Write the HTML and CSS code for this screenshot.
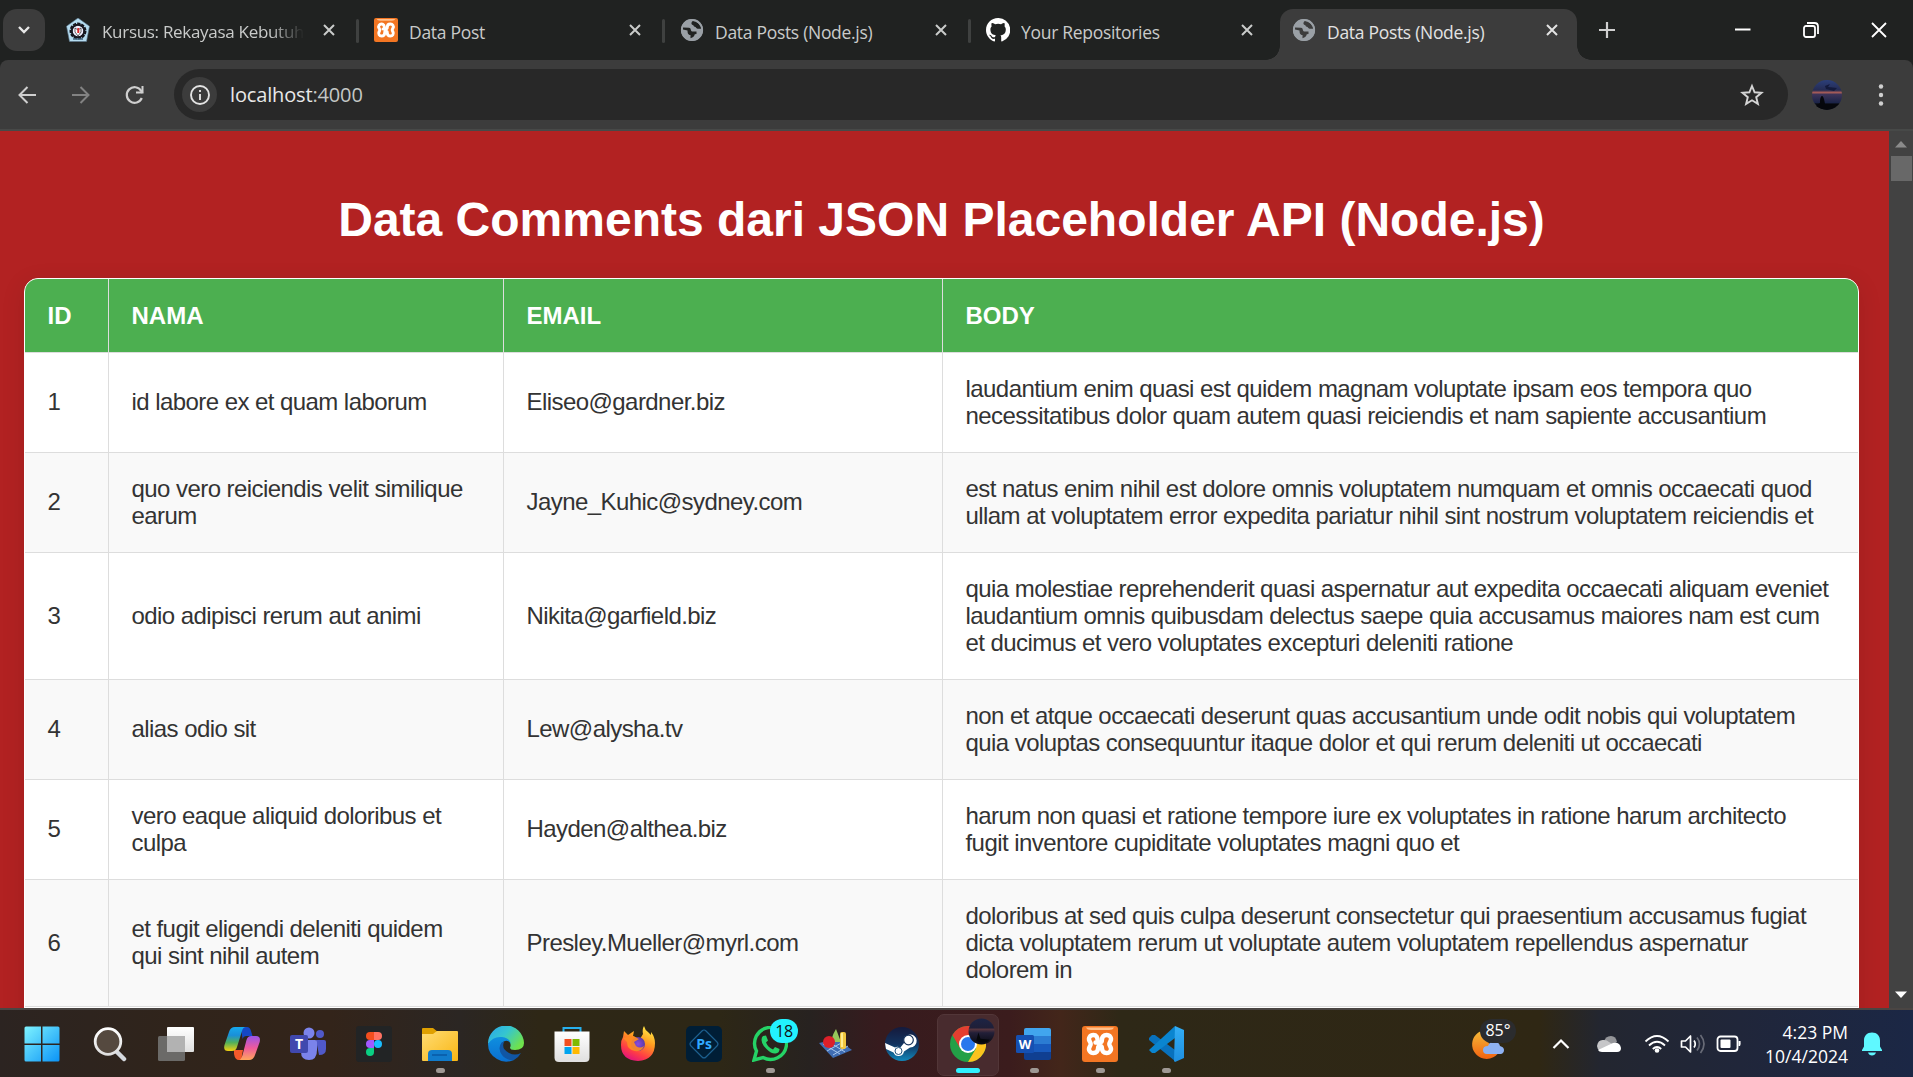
FILE: index.html
```html
<!DOCTYPE html>
<html lang="id">
<head>
<meta charset="utf-8">
<title>Data Posts (Node.js)</title>
<link rel="stylesheet" href="styles.css">
</head>
<body>
<svg class="defs" width="0" height="0" aria-hidden="true">
  <defs>
    <symbol id="x" viewBox="0 0 14 14"><path d="M2 2l10 10M12 2L2 12" stroke="currentColor" stroke-width="2" fill="none"/></symbol>
    <symbol id="globe" viewBox="0 0 24 24"><circle cx="12" cy="12" r="11" fill="#9aa0a6"/><path d="M3 9.500l6 .3c2.500.2 1.200 3.400 3.200 3.700h4.300v2.600l-1.700.2c-.7 2.200-1.500 3.300-4.300 3.900v-3.200c-2.800-.2-2.900-2.700-3-4.600L3 11.500zM12.800 3c-1.700 1.200-1.900 3.500 0 3.900 1 .2.700 1.800 2 1.900 1.300.1 1.200 1.700 2.700 1.900l3.600.1-.5-2.300C19 5.300 16.500 3.300 12.800 3z" fill="var(--hole)"/><circle cx="12" cy="12" r="10.200" fill="none" stroke="#9aa0a6" stroke-width="1.800"/></symbol>
    <symbol id="xampp" viewBox="0 0 36 36"><rect width="36" height="36" rx="3" fill="#f37623"/><path d="M4 1.500h28q-1 2.500-5 2.500H9Q5 4 4 1.500z" fill="#ffc08c"/><path d="M15.500 15.500C16 11 14 9 11.500 9 8 9 6 12 7.500 15c.6 1.200 1.200 2 1.200 3s-.6 1.800-1.200 3C6 24 8 27 11.500 27c3 0 4.500-2 4.500-4.500 0-2 1-2.500 2-2.500s2 .5 2 2.500c0 2.500 1.500 4.500 4.500 4.500 3.500 0 5.500-3 4-6-.6-1.200-1.200-2-1.200-3s.6-1.800 1.200-3c1.500-3-.5-6-4-6-3 0-4.500 2-4.500 4.500 0 2.500-1 3-2.500 3h-4" fill="none" stroke="#fff" stroke-width="4.400" stroke-linejoin="round" stroke-linecap="round"/></symbol>
    <linearGradient id="win" x1="0" y1="0" x2="1" y2="1"><stop stop-color="#7ef3ff"/><stop offset="1" stop-color="#0b93f6"/></linearGradient>
    <linearGradient id="white" x1="0" y1="0" x2="0" y2="1"><stop stop-color="#fff"/><stop offset="1" stop-color="#dfdfdf"/></linearGradient>
    <linearGradient id="cop1" x1="0" y1="0" x2="0" y2="1"><stop stop-color="#16a9ee"/><stop offset=".35" stop-color="#1a8fd8"/><stop offset=".65" stop-color="#51b05a"/><stop offset="1" stop-color="#f4d00f"/></linearGradient>
    <linearGradient id="cop2" x1="0" y1="0" x2="0" y2="1"><stop stop-color="#9a54e8"/><stop offset=".5" stop-color="#ee5a9c"/><stop offset="1" stop-color="#ffa65c"/></linearGradient>
    <linearGradient id="folder" x1="0" y1="0" x2="1" y2="1"><stop stop-color="#ffdc73"/><stop offset="1" stop-color="#f9b614"/></linearGradient>
    <linearGradient id="edge1" x1="0" y1="0" x2="1" y2=".6"><stop stop-color="#29a5ec"/><stop offset=".5" stop-color="#35c5d0"/><stop offset="1" stop-color="#6fe24c"/></linearGradient>
    <linearGradient id="edge2" x1="0" y1="0" x2="0" y2="1"><stop stop-color="#0f8fdf"/><stop offset="1" stop-color="#0a6fd0"/></linearGradient>
    <linearGradient id="fox" x1=".8" y1="0" x2=".3" y2="1"><stop stop-color="#fff04a"/><stop offset=".4" stop-color="#ff9a1f"/><stop offset=".75" stop-color="#ff3d45"/><stop offset="1" stop-color="#e1127f"/></linearGradient>
    <radialGradient id="foxglobe"><stop stop-color="#8b4be0"/><stop offset="1" stop-color="#5a3aa6"/></radialGradient>
    <linearGradient id="steam" x1="0" y1="0" x2="0" y2="1"><stop stop-color="#151a3c"/><stop offset=".5" stop-color="#12325e"/><stop offset="1" stop-color="#1288bb"/></linearGradient>
    <linearGradient id="dusk" x1="0" y1="0" x2="0" y2="1"><stop stop-color="#2b3f7a"/><stop offset=".34" stop-color="#252b52"/><stop offset=".42" stop-color="#a85c58"/><stop offset=".48" stop-color="#3d3459"/><stop offset=".75" stop-color="#1c2448"/><stop offset=".8" stop-color="#080a12"/></linearGradient>
    <linearGradient id="duskdim" x1="0" y1="0" x2="0" y2="1"><stop stop-color="#1c2445"/><stop offset=".35" stop-color="#1f1f38"/><stop offset=".42" stop-color="#55343e"/><stop offset=".55" stop-color="#221f38"/><stop offset="1" stop-color="#080a10"/></linearGradient>
    <linearGradient id="moon" x1="0" y1="0" x2="0" y2="1"><stop stop-color="#f5bd3a"/><stop offset="1" stop-color="#f26210"/></linearGradient>
    <linearGradient id="vs" x1="0" y1="0" x2="0" y2="1"><stop stop-color="#33aef5"/><stop offset="1" stop-color="#1e8fe0"/></linearGradient>
  </defs>
</svg>

<header class="tabstrip">
  <div class="tab-search"><svg width="14" height="10" viewBox="0 0 14 10"><path d="M2 2l5 5 5-5" fill="none" stroke="#e8e8e8" stroke-width="2.400"/></svg></div>
  <div class="tab first">
    <svg class="favicon" viewBox="0 0 24 24"><path d="M12 0l11.500 8.200-3 15.300h-17L.5 8.200z" fill="#b5dcf0" stroke="#587287" stroke-width=".6"/><circle cx="12" cy="13" r="7" fill="#eef" stroke="#17171f" stroke-width="3" stroke-dasharray="3 1"/><circle cx="12" cy="13" r="6.300" fill="none" stroke="#17171f" stroke-width="2"/><path d="M9 10l3 2 3-2v4l-3 4-3-4z" fill="#fff" stroke="#222" stroke-width=".7"/><path d="M11.300 10h2v5h-2z" fill="#d8262c"/><path d="M7 21h10" stroke="#41637d" stroke-width="1.500"/></svg>
    <span class="title fade">Kursus: Rekayasa Kebutuh</span><svg class="close"><use href="#x"/></svg>
  </div>
  <div class="tab"><svg class="favicon"><use href="#xampp"/></svg><span class="title">Data Post</span><svg class="close"><use href="#x"/></svg></div>
  <div class="tab"><svg class="favicon"><use href="#globe"/></svg><span class="title">Data Posts (Node.js)</span><svg class="close"><use href="#x"/></svg></div>
  <div class="tab last"><svg class="favicon" viewBox="0 0 24 24"><path d="M12 0C5.400 0 0 5.400 0 12c0 5.300 3.400 9.800 8.200 11.400.6.100.8-.3.800-.6v-2c-3.300.7-4-1.600-4-1.600-.6-1.400-1.400-1.800-1.400-1.800-1-.7.100-.7.100-.7 1.200.1 1.900 1.200 1.900 1.200 1 1.900 2.800 1.300 3.500 1 .1-.8.400-1.300.8-1.600-2.700-.3-5.500-1.300-5.500-6 0-1.200.5-2.300 1.300-3.100-.2-.4-.6-1.600 0-3.200 0 0 1-.3 3.400 1.200a11.500 11.500 0 0 1 6 0c2.300-1.500 3.300-1.200 3.300-1.200.6 1.600.2 2.800.1 3.200.8.800 1.300 1.900 1.300 3.200 0 4.600-2.800 5.600-5.500 5.900.5.400.9 1 .9 2.200v3.300c0 .3.100.7.800.6A12 12 0 0 0 12 0z" fill="#fff"/></svg><span class="title">Your Repositories</span><svg class="close"><use href="#x"/></svg></div>
  <div class="tab active"><svg class="favicon"><use href="#globe"/></svg><span class="title">Data Posts (Node.js)</span><svg class="close"><use href="#x"/></svg></div>
  <svg class="plus" width="18" height="18" viewBox="0 0 18 18"><path d="M9 1v16M1 9h16" stroke="#d0d0d0" stroke-width="2.200"/></svg>
  <div class="window-buttons">
    <svg width="16" height="16" viewBox="0 0 16 16"><path d="M0 7.500h15.500" stroke="#fff" stroke-width="2"/></svg>
    <svg width="16" height="16" viewBox="0 0 16 16"><rect x="1" y="4" width="11" height="11" rx="2" fill="none" stroke="#fff" stroke-width="1.800"/><path d="M4 1h7.500q3.500 0 3.500 3.500V12" fill="none" stroke="#fff" stroke-width="1.800"/></svg>
    <svg width="16" height="16" viewBox="0 0 16 16"><path d="M1 1l14 14M15 1L1 15" stroke="#fff" stroke-width="1.800"/></svg>
  </div>
</header>

<nav class="toolbar">
  <div class="nav-buttons">
    <svg width="20" height="20" viewBox="0 0 20 20"><path d="M19 10H3M10.500 2L2.500 10l8 8" fill="none" stroke="#cfcfcf" stroke-width="2"/></svg>
    <svg width="20" height="20" viewBox="0 0 20 20"><path d="M1 10h16M9.500 2l8 8-8 8" fill="none" stroke="#828282" stroke-width="2"/></svg>
    <svg width="20" height="20" viewBox="0 0 20 20"><path d="M16.800 13a7.800 7.800 0 1 1-.6-7.200l1.300 2" fill="none" stroke="#cfcfcf" stroke-width="2.200"/><path d="M18.500 1v7.500H11V6.500h5.500V1z" fill="#cfcfcf"/></svg>
  </div>
  <div class="address">
    <div class="info"><svg width="22" height="22" viewBox="0 0 22 22"><circle cx="11" cy="11" r="9" fill="none" stroke="#e3e3e3" stroke-width="1.900"/><path d="M11 10v6M11 6v2" stroke="#e3e3e3" stroke-width="1.900"/></svg></div>
    <span class="url">localhost<span class="port">:4000</span></span>
    <svg class="star" width="24" height="24" viewBox="0 0 24 24"><path d="M12 3l2.600 6.300 6.900.5-5.300 4.400 1.700 6.700-5.900-3.600-5.900 3.600 1.700-6.700-5.300-4.400 6.900-.5z" fill="none" stroke="#d5d5d5" stroke-width="1.900"/></svg>
  </div>
  <svg class="avatar" width="30" height="30" viewBox="0 0 30 30"><circle cx="15" cy="15" r="15" fill="url(#dusk)"/><path d="M13 6l5-2-2 3 9 1-3 3-8-2z" fill="#131a3c"/><path d="M4 26l4-3c0-5 1-7 2-7s2 2 3 8h14l-3 2q-9 7-20 0z" fill="#06070c"/></svg>
  <svg class="menu" width="6" height="22" viewBox="0 0 6 22"><g fill="#cfcfcf"><circle cx="3" cy="2.500" r="2.200"/><circle cx="3" cy="11" r="2.200"/><circle cx="3" cy="19.500" r="2.200"/></g></svg>
</nav>

<div class="viewport">
  <main class="page">
    <h1>Data Comments dari JSON Placeholder API (Node.js)</h1>
    <div class="card">
      <table>
        <colgroup><col class="c-id"><col class="c-name"><col class="c-email"><col></colgroup>
        <thead><tr><th>ID</th><th>NAMA</th><th>EMAIL</th><th>BODY</th></tr></thead>
        <tbody>
          <tr><td>1</td><td>id labore ex et quam laborum</td><td>Eliseo@gardner.biz</td><td>laudantium enim quasi est quidem magnam voluptate ipsam eos tempora quo<br>necessitatibus dolor quam autem quasi reiciendis et nam sapiente accusantium</td></tr>
          <tr><td>2</td><td>quo vero reiciendis velit similique<br>earum</td><td>Jayne_Kuhic@sydney.com</td><td>est natus enim nihil est dolore omnis voluptatem numquam et omnis occaecati quod<br>ullam at voluptatem error expedita pariatur nihil sint nostrum voluptatem reiciendis et</td></tr>
          <tr><td>3</td><td>odio adipisci rerum aut animi</td><td>Nikita@garfield.biz</td><td>quia molestiae reprehenderit quasi aspernatur aut expedita occaecati aliquam eveniet<br>laudantium omnis quibusdam delectus saepe quia accusamus maiores nam est cum<br>et ducimus et vero voluptates excepturi deleniti ratione</td></tr>
          <tr><td>4</td><td>alias odio sit</td><td>Lew@alysha.tv</td><td>non et atque occaecati deserunt quas accusantium unde odit nobis qui voluptatem<br>quia voluptas consequuntur itaque dolor et qui rerum deleniti ut occaecati</td></tr>
          <tr><td>5</td><td>vero eaque aliquid doloribus et<br>culpa</td><td>Hayden@althea.biz</td><td>harum non quasi et ratione tempore iure ex voluptates in ratione harum architecto<br>fugit inventore cupiditate voluptates magni quo et</td></tr>
          <tr><td>6</td><td>et fugit eligendi deleniti quidem<br>qui sint nihil autem</td><td>Presley.Mueller@myrl.com</td><td>doloribus at sed quis culpa deserunt consectetur qui praesentium accusamus fugiat<br>dicta voluptatem rerum ut voluptate autem voluptatem repellendus aspernatur<br>dolorem in</td></tr>
        </tbody>
      </table>
    </div>
  </main>
  <div class="scrollbar">
    <svg width="12" height="7" viewBox="0 0 12 7"><path d="M0 6.500L6 0l6 6.500z" fill="#8b8b8b"/></svg>
    <div class="thumb"></div>
    <svg class="down" width="12" height="7" viewBox="0 0 12 7"><path d="M0 .5h12L6 7z" fill="#fff"/></svg>
  </div>
</div>

<footer class="taskbar">
  <div class="apps">
    <div class="app start"><svg viewBox="0 0 36 36"><path d="M2 .500h15v17H.5V2Q.5.500 2 .500zM18.500.500H34q1.500 0 1.500 1.500v15.500h-17zM.5 19H17v16.500H2Q.5 35.500.5 34zM18.500 19h17v15q0 1.500-1.500 1.500H18.500z" fill="url(#win)"/></svg></div>
    <div class="app"><svg viewBox="0 0 36 36"><path d="M24 25l8 8" stroke="#d5d9de" stroke-width="4.500" stroke-linecap="round"/><circle cx="16" cy="15.500" r="12.800" fill="#55493f" stroke="url(#white)" stroke-width="2.800"/></svg></div>
    <div class="app"><svg viewBox="0 0 36 36"><rect x="9" y="1" width="27" height="25" rx="1" fill="url(#white)"/><rect x="0" y="10" width="27" height="25" rx="1.500" fill="#6b6a68" /><rect x="9" y="10" width="18" height="16" fill="#b2b2b2"/></svg></div>
    <div class="app"><svg viewBox="0 0 36 36"><path d="M17 1h6q3 0 4 4l1.500 5h-6q-3 0-4 3z" fill="#1547c4"/><path d="M10 24h9l-1 5q-1 5 2 5h-5q-4 0-5-6z" fill="#f5592b"/><path d="M11 1h11q-3 0-4 4l-5 16q-1 4-5 4H4q-5 0-3.500-6L5 6q1.500-5 6-5z" fill="url(#cop1)"/><path d="M25 34H15q2 0 3.500-5l4-15q1-4 5-4H32q5 0 3.700 6L31 29q-1.500 5-6 5z" fill="url(#cop2)"/></svg></div>
    <div class="app"><svg viewBox="0 0 36 36"><circle cx="30" cy="8" r="4" fill="#5059c9"/><path d="M26 14h8q2 0 2 2v7q0 6-7 6z" fill="#5059c9"/><circle cx="19" cy="7" r="5.500" fill="#7b83eb"/><path d="M11 14h14q2 0 2 2v8q0 10-8 10t-8-8z" fill="#7b83eb"/><rect y="9" width="18" height="18" rx="2" fill="#4048ae"/><text x="9" y="23" class="t-letter">T</text></svg></div>
    <div class="app"><svg viewBox="0 0 36 36"><rect width="36" height="36" rx="3" fill="#222425"/><path d="M18 6h-4a4 4 0 0 0 0 8h4z" fill="#f24e1e"/><path d="M18 6h4a4 4 0 0 1 0 8h-4z" fill="#ff7262"/><path d="M18 14h-4a4 4 0 0 0 0 8h4z" fill="#a259ff"/><circle cx="22" cy="18" r="4" fill="#1abcfe"/><path d="M18 22h-4a4 4 0 1 0 4 4z" fill="#0acf83"/></svg></div>
    <div class="app run"><svg viewBox="0 0 36 36"><path d="M0 3q0-1 1-1h10l5 4-4 5H0z" fill="#dfa000"/><path d="M0 8h11l4-3h20q1 0 1 1v28q0 1-1 1H1q-1 0-1-1z" fill="url(#folder)"/><path d="M6 35V28q0-4 4-4h16q4 0 4 4v7z" fill="#117bcb"/><path d="M10 29h15" stroke="#0959a5" stroke-width="1.500"/></svg></div>
    <div class="app"><svg viewBox="0 0 36 36"><path d="M0 18A18 18 0 0 1 36 17q0 7-9 7-5 0-5-2.500c2-3-1-8.500-6-8.500Q6 13 0 18z" fill="url(#edge1)"/><path d="M0 18Q5 10 14 11q8 1 9 7-2-4-6-3-6 2-3 10 4 8 12 9Q17 38 9 33 0 28 0 18z" fill="url(#edge2)"/><path d="M14 16q-5 6 0 13 5 6 12 5 5-3 7-7-6 3-12 0-8-4-5-11z" fill="#1156a4"/></svg></div>
    <div class="app"><svg viewBox="0 0 36 36"><path d="M9.500 7V2h17v5" fill="none" stroke="#27b0ee" stroke-width="2"/><path d="M.5 5.500h35v26q0 4.500-4.500 4.500H5q-4.500 0-4.500-4.500z" fill="url(#white)"/><path d="M10.500 13h7v7h-7z" fill="#f25022"/><path d="M18.500 13h7v7h-7z" fill="#7fba00"/><path d="M10.500 21h7v7h-7z" fill="#00a4ef"/><path d="M18.500 21h7v7h-7z" fill="#ffb900"/></svg></div>
    <div class="app"><svg viewBox="0 0 36 36"><path d="M4 5l4 4 6-4-1 5 7 3 3-5q-1-5 1-8 1 4 4 6l3 3v-3q4 5 4 11 0 17-17 18Q1 34 1 19q0-5 2-8z" fill="url(#fox)"/><circle cx="18" cy="18" r="7" fill="url(#foxglobe)"/><path d="M3 12l10-2 6 3-5 3 2 4q4 3 8 0-2 6-9 5-8-1-8-9z" fill="#ff8b21" opacity=".9"/></svg></div>
    <div class="app"><svg viewBox="0 0 36 36"><rect width="36" height="36" rx="5" fill="#001e36"/><path d="M18 4q1 0 2 1l11 11q2 2 0 4L20 31q-2 2-4 0L5 20q-2-2 0-4L16 5q1-1 2-1z" fill="none" stroke="#1d608f" stroke-width="1.200"/><text x="18" y="23" class="ps-letter">Ps</text></svg></div>
    <div class="app run"><svg viewBox="0 0 36 36"><path d="M2 34l2.500-9A16 16 0 1 1 11 31.500z" fill="none" stroke="#25d366" stroke-width="3.400"/><path d="M11 10l3-.5 2 5-2 2q2 5 7 7l2-2.500 4.500 2q0 4-4 4.500-4 .5-9-4.500-5-5-5-9 0-3 1.500-4z" fill="#25d366"/></svg><span class="badge">18</span></div>
    <div class="app"><svg viewBox="0 0 36 36"><path d="M1 17l18-4 15 11-19 8z" fill="#3f6db3"/><path d="M5 18l17 10M11 16l16 10M9 25l16-9M15 29l15-9" stroke="#a8c7ec" stroke-width="1"/><path d="M18 3q-6 10-3 13h8z" fill="#97c65b"/><circle cx="11" cy="16" r="6" fill="#dd2029"/><rect x="22" y="6" width="6" height="17" rx="2" fill="#f0c63f"/><path d="M24 7v14" stroke="#ffed91" stroke-width="2"/></svg></div>
    <div class="app"><svg viewBox="0 0 36 36"><circle cx="18" cy="18" r="17" fill="url(#steam)"/><path d="M1 17l10 4.500q3-1.500 5 .5l4-5a6.500 6.500 0 1 1 6 4.500l-6 4q-1 4.500-5.500 4.500-3.500 0-5-3.500L2 23z" fill="#fff"/><circle cx="24.500" cy="14" r="4.800" fill="#fff" stroke="#17335c" stroke-width="1.200"/><circle cx="14.500" cy="25" r="3.500" fill="none" stroke="#24537c"/></svg></div>
    <div class="app current"><svg viewBox="0 0 36 36"><circle cx="18" cy="18" r="18" fill="#23a047"/><path d="M2.400 9A18 18 0 0 1 33.600 9H18l-8 13z" fill="#e53e30"/><path d="M18 9h15.600A18 18 0 0 1 18 36l8-13.500z" fill="#fcc31e"/><circle cx="18" cy="18" r="9" fill="#fff"/><circle cx="18" cy="18" r="7" fill="#2878ed"/></svg><svg class="profile" viewBox="0 0 26 26"><circle cx="13" cy="13" r="12.500" fill="url(#duskdim)"/><path d="M8 22l2-8 2 6 9 1q-5 5-13 1z" fill="#05070b"/></svg></div>
    <div class="app run"><svg viewBox="0 0 36 36"><path d="M8 4q0-2 2-2h23q2 0 2 2v6H8z" fill="#41a5ee"/><path d="M8 10h27v8H8z" fill="#2b7cd3"/><path d="M8 18h27v8H8z" fill="#185abd"/><path d="M8 26h27v6q0 2-2 2H10q-2 0-2-2z" fill="#103f91"/><rect y="9" width="18" height="18" rx="1.500" fill="#1550b2"/><text x="9" y="22.500" class="w-letter">W</text></svg></div>
    <div class="app run"><svg><use href="#xampp"/></svg></div>
    <div class="app run"><svg viewBox="0 0 36 36"><path d="M1 12l3-3h3l20 15v11L1 14z" fill="#0871bd"/><path d="M1 24l26-24v12L7 27H4l-3-3z" fill="#0a85d0"/><path d="M27 0l9 4v28l-9 4-1-1z" fill="url(#vs)"/></svg></div>
  </div>
  <div class="tray">
    <div class="weather"><svg width="36" height="36" viewBox="0 0 36 36"><path d="M15 4a14.500 14.500 0 1 0 15 20Q15 20 15 4z" fill="url(#moon)"/><path d="M17 28q-4 0-4-4t5-4q2-5 7-4 4 0 5 4 4 1 4 4t-3 4z" fill="#8fb2f3"/></svg><span class="temp">85°</span></div>
    <svg class="chev" width="18" height="12" viewBox="0 0 18 12"><path d="M1.500 10L9 2.500 16.500 10" fill="none" stroke="#fff" stroke-width="2.200"/></svg>
    <svg class="cloud" width="24" height="18" viewBox="0 0 24 18"><path d="M7 7q1-6 7-6 5 0 6 6L12 12z" fill="#949599"/><path d="M0 11q1-7 7-6 3 0 5 2l8 5-17 4q-3-2-3-5z" fill="#c6c6c8"/><path d="M1 15l15-7q7-1 8 5 0 4-4 4H5q-3 0-4-2z" fill="#fff"/></svg>
    <svg class="wifi" width="26" height="20" viewBox="0 0 26 20"><g fill="none" stroke="#fff" stroke-width="1.800"><path d="M1.500 7.500q11.500-11 23 0M5 11.500q8-7.500 16 0M8.800 15q4.200-4 8.400 0"/></g><circle cx="13" cy="16.500" r="2.300" fill="#fff"/></svg>
    <svg class="sound" width="26" height="20" viewBox="0 0 26 20"><path d="M1.500 7h4l5-5v16l-5-5h-4z" fill="none" stroke="#fff" stroke-width="1.700" stroke-linejoin="round"/><path d="M14 6.500q2.500 3.500 0 7" fill="none" stroke="#fff" stroke-width="1.700"/><path d="M17 3.500q5 6.500 0 13M20.500 1q7 9 0 18" fill="none" stroke="#686b77" stroke-width="1.700"/></svg>
    <svg class="battery" width="26" height="18" viewBox="0 0 26 18"><rect x="1.500" y="1.500" width="20" height="14.500" rx="3" fill="none" stroke="#fff" stroke-width="1.800"/><rect x="4.500" y="4.500" width="10" height="8.500" rx="1" fill="#fff"/><path d="M22.500 6h2q.5 3-.5 5h-1.500z" fill="#fff"/></svg>
    <div class="clock"><div class="time">4:23 PM</div><div class="date">10/4/2024</div></div>
    <svg class="bell" width="20" height="24" viewBox="0 0 20 24"><path d="M10 .500c5 0 8 3.500 8 8v6l2 3.500v1H0v-1l2-3.500v-6c0-4.500 3-8 8-8zM6 20.500h8q-1 3-4 3t-4-3z" fill="#5ff8ff"/></svg>
  </div>
</footer>
</body>
</html>
```
FILE: styles.css
```css
* { box-sizing: border-box; }
body { margin: 0; width: 1913px; height: 1077px; overflow: hidden; display: flex; flex-direction: column; background: #202221; font-family: "Open Sans", "Noto Sans", sans-serif; }
svg { display: block; flex: none; }
.defs { position: absolute; }

/* tab strip */
.tabstrip { height: 60px; flex: none; display: flex; align-items: flex-start; background: #202221; padding-left: 3px; color: #c9cbca; --hole: #202221; }
.tab-search { width: 42px; height: 42px; margin: 9px 7px 0 0; border-radius: 14px; background: #3c3c3c; display: flex; align-items: center; justify-content: center; }
.tab { width: 306px; height: 51px; margin-top: 9px; padding: 0 22px 9px 16px; display: flex; align-items: center; position: relative; }
.tab.first { padding-left: 14px; }
.tab.first .favicon { margin-right: 12px; }
.tab::after { content: ""; position: absolute; right: -1px; top: 10px; width: 3px; height: 24px; border-radius: 2px; background: #3f4140; }
.tab.last::after { display: none; }
.favicon { width: 24px; height: 24px; margin-right: 11px; }
.title { flex: 1; font-size: 17.500px; line-height: 24px; white-space: nowrap; overflow: hidden; letter-spacing: -0.3px; padding-top: 3px; }
.fade { font-size: 17px; max-width: 202px; margin-right: auto; -webkit-mask-image: linear-gradient(90deg, #000 83%, transparent); mask-image: linear-gradient(90deg, #000 83%, transparent); }
.close { width: 14px; height: 14px; }
.tab.active { --hole: #3c3c3c; background: #3c3c3c; color: #e3e3e3; width: 297px; margin-left: 4px; padding: 0 18px 9px 12px; border-radius: 13px 13px 0 0; }
.tab.active::before, .tab.active::after { content: ""; position: absolute; top: auto; bottom: 0; width: 14px; height: 14px; border-radius: 0; }
.tab.active::before { left: -14px; background: radial-gradient(circle at 0 0, transparent 13.500px, #3c3c3c 14px); }
.tab.active::after { right: -14px; background: radial-gradient(circle at 100% 0, transparent 13.500px, #3c3c3c 14px); }
.plus { margin: 21px 0 0 21px; }
.window-buttons { display: flex; gap: 52px; margin: 22px 26px 0 auto; }

/* toolbar */
.toolbar { height: 71px; flex: none; display: flex; align-items: center; background: #3c3c3c; border-bottom: 2px solid #474948; border-radius: 8px 8px 0 0; padding-left: 17px; }
.nav-buttons { display: flex; gap: 34px; width: 157px; }
.address { width: 1614px; height: 51px; border-radius: 26px; background: #282828; display: flex; align-items: center; padding: 0 24px 0 8px; }
.info { width: 35px; height: 35px; border-radius: 50%; background: #3c3c3c; display: flex; align-items: center; justify-content: center; }
.url { margin-left: 13px; font-size: 20px; line-height: 28px; color: #e8e8e8; letter-spacing: -0.15px; }
.port { color: #c4c7c5; }
.star { margin-left: auto; }
.avatar { margin-left: 24px; }
.menu { margin-left: 36px; }

/* page */
.viewport { height: 877px; flex: none; display: flex; overflow: hidden; background: #b22222; }
.page { width: 1889px; padding: 0 30px 0 24px; font-family: "Liberation Sans", Arial, sans-serif; color: #333; }
h1 { margin: 61px 0 31px; height: 55px; line-height: 56px; font-size: 48px; text-align: center; color: #fff; white-space: nowrap; }
.card { background: #fff; border: 1px solid #fff; border-radius: 14px; overflow: hidden; height: 900px; box-shadow: 0 6px 24px rgba(0, 0, 0, 0.1); }
table { width: 100%; table-layout: fixed; border-collapse: separate; border-spacing: 0; font-size: 24px; line-height: 27px; }
.c-id { width: 84px; }
.c-name { width: 395px; }
.c-email { width: 439px; }
th, td { padding: 22.500px 0 22.500px 22.500px; text-align: left; vertical-align: middle; border-right: 1px solid #ddd; border-bottom: 1px solid #ddd; white-space: nowrap; }
td { padding-top: 21.500px; padding-bottom: 23.500px; letter-spacing: -0.56px; }
th { background: #4caf50; color: #fff; font-weight: bold; height: 74px; }
th:last-child, td:last-child { border-right: 0; }
tbody tr:nth-child(even) { background: #f9f9f9; }
.scrollbar { width: 24px; background: #424242; display: flex; flex-direction: column; align-items: center; padding: 10px 0; }
.thumb { width: 21px; height: 25px; margin: 8px 0 0 1px; background: #686868; }
.down { margin-top: auto; }

/* taskbar */
.taskbar { height: 69px; flex: none; display: flex; justify-content: space-between; border-top: 2px solid #4a4543; background: linear-gradient(90deg, #2c2421 0, #30241b 180px, #33241a 330px, #2b2623 460px, #2e2716 540px, #2d2716 720px, #272220 810px, #371b1e 880px, #3b1c1d 1010px, #43261a 1060px, #2e2817 1120px, #2f2714 1540px, #232630 1600px, #20263a 1740px, #1b2745 1913px); }
.apps { display: flex; padding-left: 11px; }
.app { width: 66px; height: 67px; display: flex; align-items: center; justify-content: center; position: relative; }
.app > svg { width: 36px; height: 36px; position: relative; }
.start { padding-right: 4px; }
.run::after, .current::after { content: ""; position: absolute; bottom: 4px; left: 29px; width: 9px; height: 5px; border-radius: 3px; background: #9f9894; }
.current::after { width: 24px; left: 21px; background: #2ff1ff; }
.current::before { content: ""; position: absolute; left: 2px; top: 4px; width: 60px; height: 60px; border-radius: 7px; background: #482b2e; border: 1px solid #523638; }
.app > .profile { position: absolute; left: 33px; top: 8px; width: 27px; height: 27px; }
.badge { position: absolute; left: 33px; top: 9px; width: 28px; height: 24px; border-radius: 12px; background: #22f2ff; color: #111; font-size: 16px; line-height: 24px; text-align: center; letter-spacing: -0.5px; }
.t-letter, .w-letter, .ps-letter { fill: #fff; font: bold 14px "Open Sans", sans-serif; text-anchor: middle; }
.ps-letter { fill: #31a8ff; }
.w-letter { font-size: 13px; }

.tray { display: flex; align-items: center; color: #fff; padding-right: 31px; }
.weather { position: relative; margin-right: 46px; }
.temp { position: absolute; left: 10px; top: -7px; width: 36px; height: 24px; border-radius: 12px; background: #2b2c2e; font-size: 16px; line-height: 23px; text-align: center; letter-spacing: -0.1px; }
.chev { margin-right: 27px; }
.cloud { margin-right: 23px; }
.wifi { margin-right: 10px; }
.sound { margin-right: 10px; }
.clock { width: 106px; text-align: right; font-size: 17.500px; line-height: 24px; letter-spacing: 0; }
.bell { margin-left: 14px; margin-bottom: 0; }
```
